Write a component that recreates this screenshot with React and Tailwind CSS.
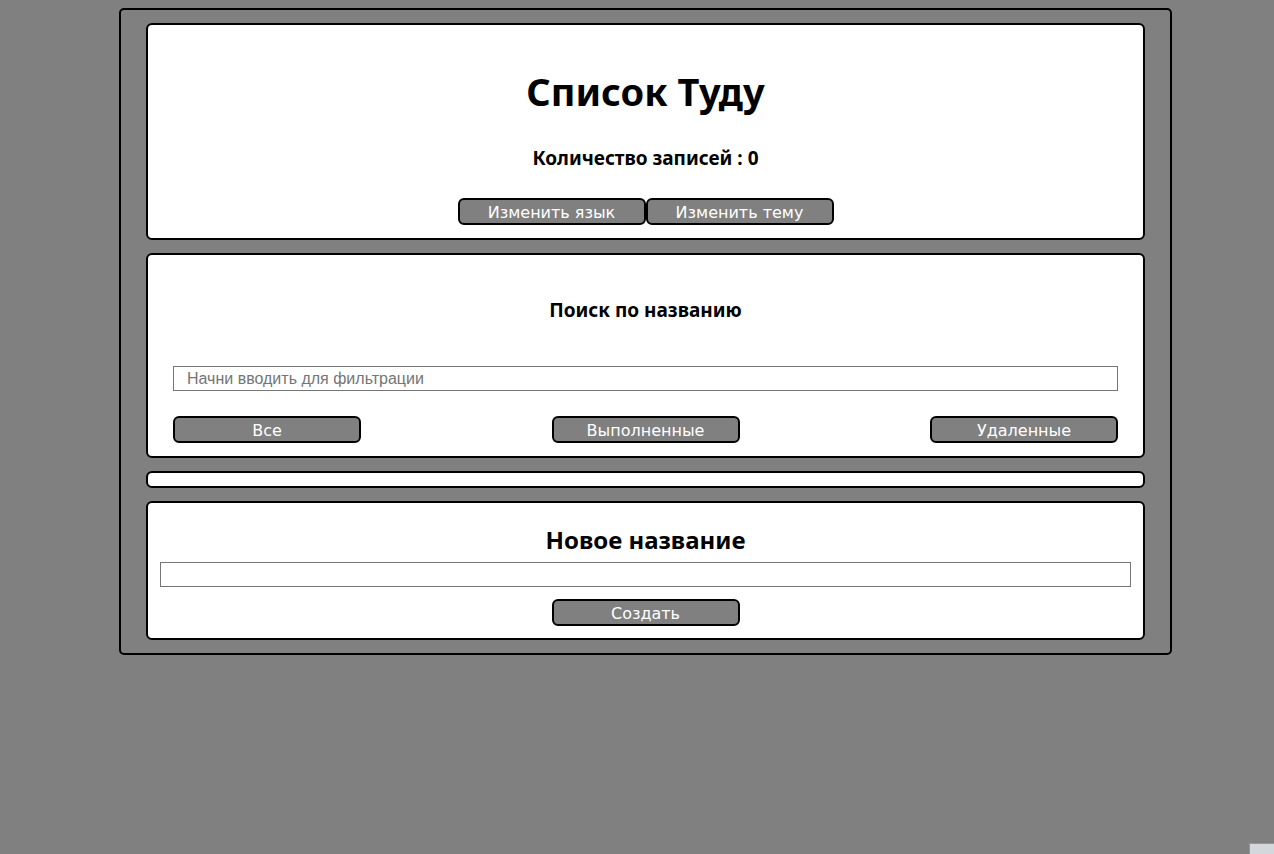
import React, { useState } from 'react';

const btn =
  'w-[188px] h-[27px] bg-[#808080] border-2 border-black rounded-[6px] text-white text-[16px] leading-none pt-[2px] font-["DejaVu_Sans",sans-serif]';

const Card = ({ className = '', children }) => (
  <div className={`bg-white border-2 border-black rounded-[6px] ${className}`}>
    {children}
  </div>
);

const App = () => {
  const [filter, setFilter] = useState('');
  const [title, setTitle] = useState('');
  const todos = [];

  return (
    <main className="min-h-screen w-full bg-[#808080] pt-[8px] font-['Noto_Sans',sans-serif]">
      <div className="ml-[119px] w-[1053px] border-2 border-black rounded-[5px] px-[25px] pt-[13px] pb-[13px] flex flex-col gap-[13px]">
        <Card className="h-[217px] flex flex-col items-center">
          <h1 className="mt-[46px] text-[38px] leading-[40px] font-bold text-black">Список Туду</h1>
          <h3 className="mt-[38px] text-[19px] leading-none font-bold">
            Количество записей : {todos.length}
          </h3>
          <div className="mt-[30px] flex">
            <button className={btn}>Изменить язык</button>
            <button className={btn}>Изменить тему</button>
          </div>
        </Card>

        <Card className="h-[205px] px-[25px] flex flex-col">
          <h3 className="mt-[46px] text-center text-[19px] leading-none font-bold">Поиск по названию</h3>
          <input
            value={filter}
            onChange={(e) => setFilter(e.target.value)}
            placeholder="Начни вводить для фильтрации"
            className="mt-[46px] h-[25px] w-full border border-[#767676] px-[13px] text-[16px] font-['Liberation_Sans',sans-serif] placeholder:text-[#757575] outline-none"
          />
          <div className="mt-[25px] flex justify-between">
            <button className={btn}>Все</button>
            <button className={btn}>Выполненные</button>
            <button className={btn}>Удаленные</button>
          </div>
        </Card>

        <Card className="h-[17px]" />

        <Card className="h-[139px] px-[12px] flex flex-col items-center">
          <h2 className="mt-[25px] text-[24px] leading-none font-bold">Новое название</h2>
          <input
            value={title}
            onChange={(e) => setTitle(e.target.value)}
            className="mt-[10px] h-[25px] w-full border border-[#767676] px-[4px] text-[16px] outline-none"
          />
          <button className={`mt-[12px] ${btn}`}>Создать</button>
        </Card>
      </div>
      <div className="fixed right-0 bottom-0 w-[25px] h-[11px] bg-[#d4d8dc] border-l border-t border-[#9a8fa8]" />
    </main>
  );
};

export default App;
